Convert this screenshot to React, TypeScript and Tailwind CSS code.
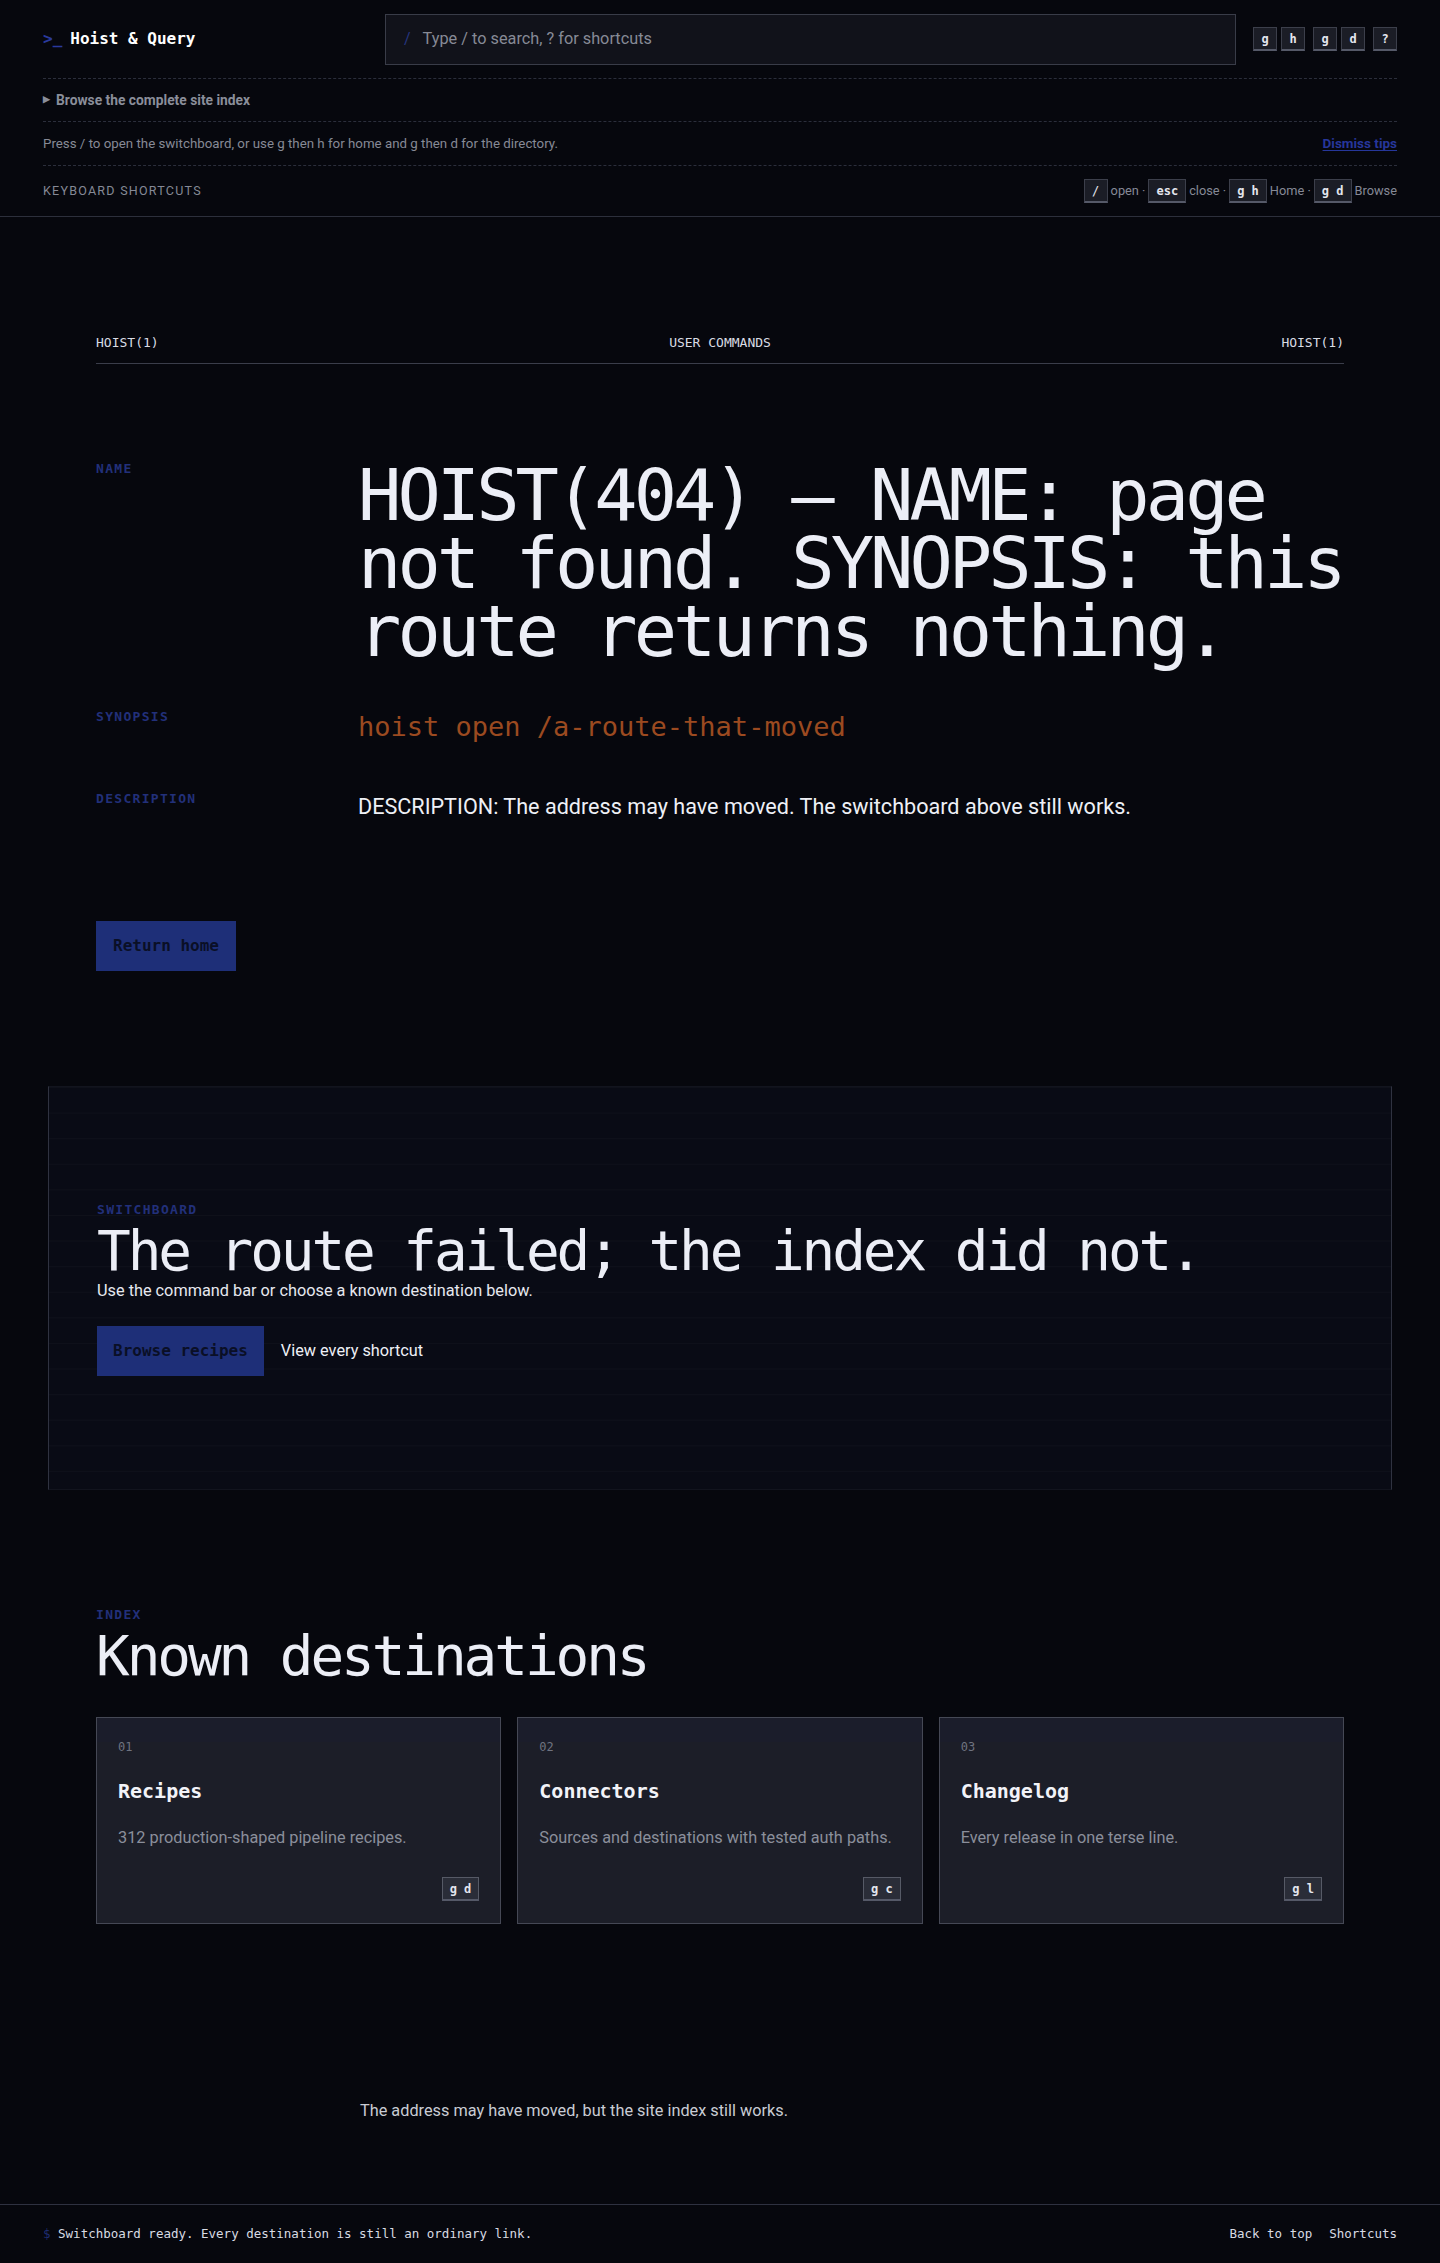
import React from 'react';

const mono = "font-['DejaVu_Sans_Mono',monospace]";
const sans = "font-['Roboto',sans-serif]";
const label = `${mono} text-[13px] font-bold leading-4 tracking-[0.1em] text-[#22307a]`;

function Key({ children, className = '' }: { children: React.ReactNode; className?: string }) {
  return (
    <kbd
      className={`${mono} inline-flex h-[24px] min-w-[24px] items-center justify-center border border-[#3c3f4b] border-b-2 border-b-[#555968] bg-[#1b1d26] px-[7px] text-[12px] font-bold leading-none text-[#e4e6ee] ${className}`}
    >
      {children}
    </kbd>
  );
}

const cards = [
  { n: '01', title: 'Recipes', desc: '312 production-shaped pipeline recipes.', key: 'g d' },
  { n: '02', title: 'Connectors', desc: 'Sources and destinations with tested auth paths.', key: 'g c' },
  { n: '03', title: 'Changelog', desc: 'Every release in one terse line.', key: 'g l' },
];

export default function App() {
  return (
    <div className={`min-h-screen bg-[#06070d] text-[#e8eaf2] ${sans}`}>
      {/* top bar */}
      <header className="border-b border-[#2c2f3b]">
        <div className="px-[43px]">
          <div className="flex h-[78px] items-center">
            <div className={`${mono} flex w-[342px] shrink-0 items-center gap-[8px] text-[16px] font-bold`}>
              <span className="text-[#2a3a9c]">&gt;_</span>
              <span className="text-white">Hoist &amp; Query</span>
            </div>
            <div className="flex h-[51px] flex-1 items-center gap-[12px] border border-[#393c48] bg-[#11121a] pl-[18px]">
              <span className="text-[16px] text-[#26357f]">/</span>
              <span className="text-[16.3px] text-[#878a96]">Type / to search, ? for shortcuts</span>
            </div>
            <div className="ml-[17px] flex items-center gap-[8px]">
              <div className="flex gap-[4px]">
                <Key className="px-[6px]">g</Key>
                <Key className="px-[6px]">h</Key>
              </div>
              <div className="flex gap-[4px]">
                <Key className="px-[6px]">g</Key>
                <Key className="px-[6px]">d</Key>
              </div>
              <Key className="px-[6px]">?</Key>
            </div>
          </div>

          <div className="flex h-[43px] items-center gap-[6px] border-t border-dashed border-[#2b2e3b] text-[13.8px] font-bold text-[#8a8e9a]">
            <span className="text-[9px]">▶</span>
            <span>Browse the complete site index</span>
          </div>

          <div className="flex h-[44px] items-center justify-between border-t border-dashed border-[#2b2e3b] text-[13.3px] text-[#868a96]">
            <span>Press / to open the switchboard, or use g then h for home and g then d for the directory.</span>
            <a className="text-[13.5px] font-bold text-[#26369a] underline underline-offset-2">Dismiss tips</a>
          </div>

          <div className="flex h-[51px] items-center justify-between border-t border-dashed border-[#2b2e3b]">
            <span className="text-[12.5px] uppercase tracking-[0.1em] text-[#858996]">Keyboard shortcuts</span>
            <div className="flex items-center gap-[3px] text-[12.8px] text-[#858996]">
              <Key className="font-normal">/</Key>
              <span>open ·</span>
              <Key>esc</Key>
              <span>close ·</span>
              <Key>g h</Key>
              <span>Home ·</span>
              <Key>g d</Key>
              <span>Browse</span>
            </div>
          </div>
        </div>
      </header>

      {/* man page */}
      <main className="px-24 pt-[116px] pb-[115px]">
        <div className={`${mono} flex justify-between border-b border-[#3a3d4a] pb-[10px] text-[13px] leading-5 text-[#d9dce4]`}>
          <span>HOIST(1)</span>
          <span>USER COMMANDS</span>
          <span>HOIST(1)</span>
        </div>

        <div className="mt-[97px] flex flex-col">
          <div className="grid grid-cols-[262px_1fr]">
            <div className={label}>NAME</div>
            <h1 className={`${mono} whitespace-nowrap text-[72px] font-normal leading-[68px] tracking-[-0.055em] text-[#eceef6]`}>
              HOIST(404) — NAME: page
              <br />
              not found. SYNOPSIS: this
              <br />
              route returns nothing.
            </h1>
          </div>
          <div className="mt-[44px] grid grid-cols-[262px_1fr]">
            <div className={label}>SYNOPSIS</div>
            <p className={`${mono} text-[27px] leading-[36px] text-[#9b4a20]`}>hoist open /a-route-that-moved</p>
          </div>
          <div className="mt-[46px] grid grid-cols-[262px_1fr]">
            <div className={label}>DESCRIPTION</div>
            <p className="text-[21.6px] leading-[32px] text-[#eef0f6]">
              DESCRIPTION: The address may have moved. The switchboard above still works.
            </p>
          </div>
        </div>

        <button className={`${mono} mt-[98px] h-[50px] bg-[#1e2f78] px-[17px] text-[16px] font-bold text-[#0a0f26]`}>
          Return home
        </button>
      </main>

      {/* switchboard */}
      <section className="mx-12 h-[404px] border-x border-y border-x-[#2f3240] border-y-[#12141e] bg-[#090b15] bg-[linear-gradient(to_bottom,rgba(255,255,255,0.025)_1px,transparent_1px)] [background-size:100%_25.6px] pl-[48px] pt-[115px]">
        <div className={label}>SWITCHBOARD</div>
        <h2 className={`${mono} mt-[5px] whitespace-nowrap text-[56px] font-normal leading-[56px] tracking-[-0.055em] text-[#eceef6]`}>
          The route failed; the index did not.
        </h2>
        <p className="text-[16.3px] leading-6 text-[#e6e8ef]">Use the command bar or choose a known destination below.</p>
        <div className="mt-[23px] flex items-center gap-[17px]">
          <button className={`${mono} h-[50px] bg-[#1e2f78] px-[16px] text-[16px] font-bold text-[#0a0f26]`}>
            Browse recipes
          </button>
          <a className="text-[16.3px] text-[#eef0f6]">View every shortcut</a>
        </div>
      </section>

      {/* index */}
      <section className="px-24 pt-[117px]">
        <div className={label}>INDEX</div>
        <h2 className={`${mono} mt-[5px] text-[56px] font-normal leading-[56px] tracking-[-0.055em] text-[#eceef6]`}>
          Known destinations
        </h2>
        <div className="mt-[33px] grid grid-cols-3 gap-4">
          {cards.map((c) => (
            <a
              key={c.n}
              className="flex h-[207px] flex-col border border-[#454855] bg-[#1c1e28] bg-[linear-gradient(to_bottom,#1b1d2b_0px,#1b1d2b_24px,#1c1e28_24px)] p-[21px]"
            >
              <span className={`${mono} text-[12px] leading-4 text-[#6f7380]`}>{c.n}</span>
              <span className={`${mono} mt-[22px] text-[20px] font-bold leading-[28px] text-[#f2f3f8]`}>{c.title}</span>
              <span className="mt-[21px] whitespace-nowrap text-[16.3px] leading-6 text-[#8b8f9b]">{c.desc}</span>
              <div className="mt-[27px] flex justify-end">
                <Key className="h-[24px] bg-[#2a2d38] border-[#565a66]">{c.key}</Key>
              </div>
            </a>
          ))}
        </div>
      </section>

      <div className="px-24 pt-[175px] pb-[81px]">
        <p className="pl-[264px] text-[16.3px] leading-6 text-[#c9ccd4]">
          The address may have moved, but the site index still works.
        </p>
      </div>

      <footer className={`${mono} flex h-[60px] items-center justify-between border-t border-[#2e3140] px-[43px] text-[12.5px] text-[#d8dbe3]`}>
        <span>
          <span className="text-[#1f2d70]">$</span> Switchboard ready. Every destination is still an ordinary link.
        </span>
        <div className="flex gap-[17px]">
          <a>Back to top</a>
          <a>Shortcuts</a>
        </div>
      </footer>
    </div>
  );
}
